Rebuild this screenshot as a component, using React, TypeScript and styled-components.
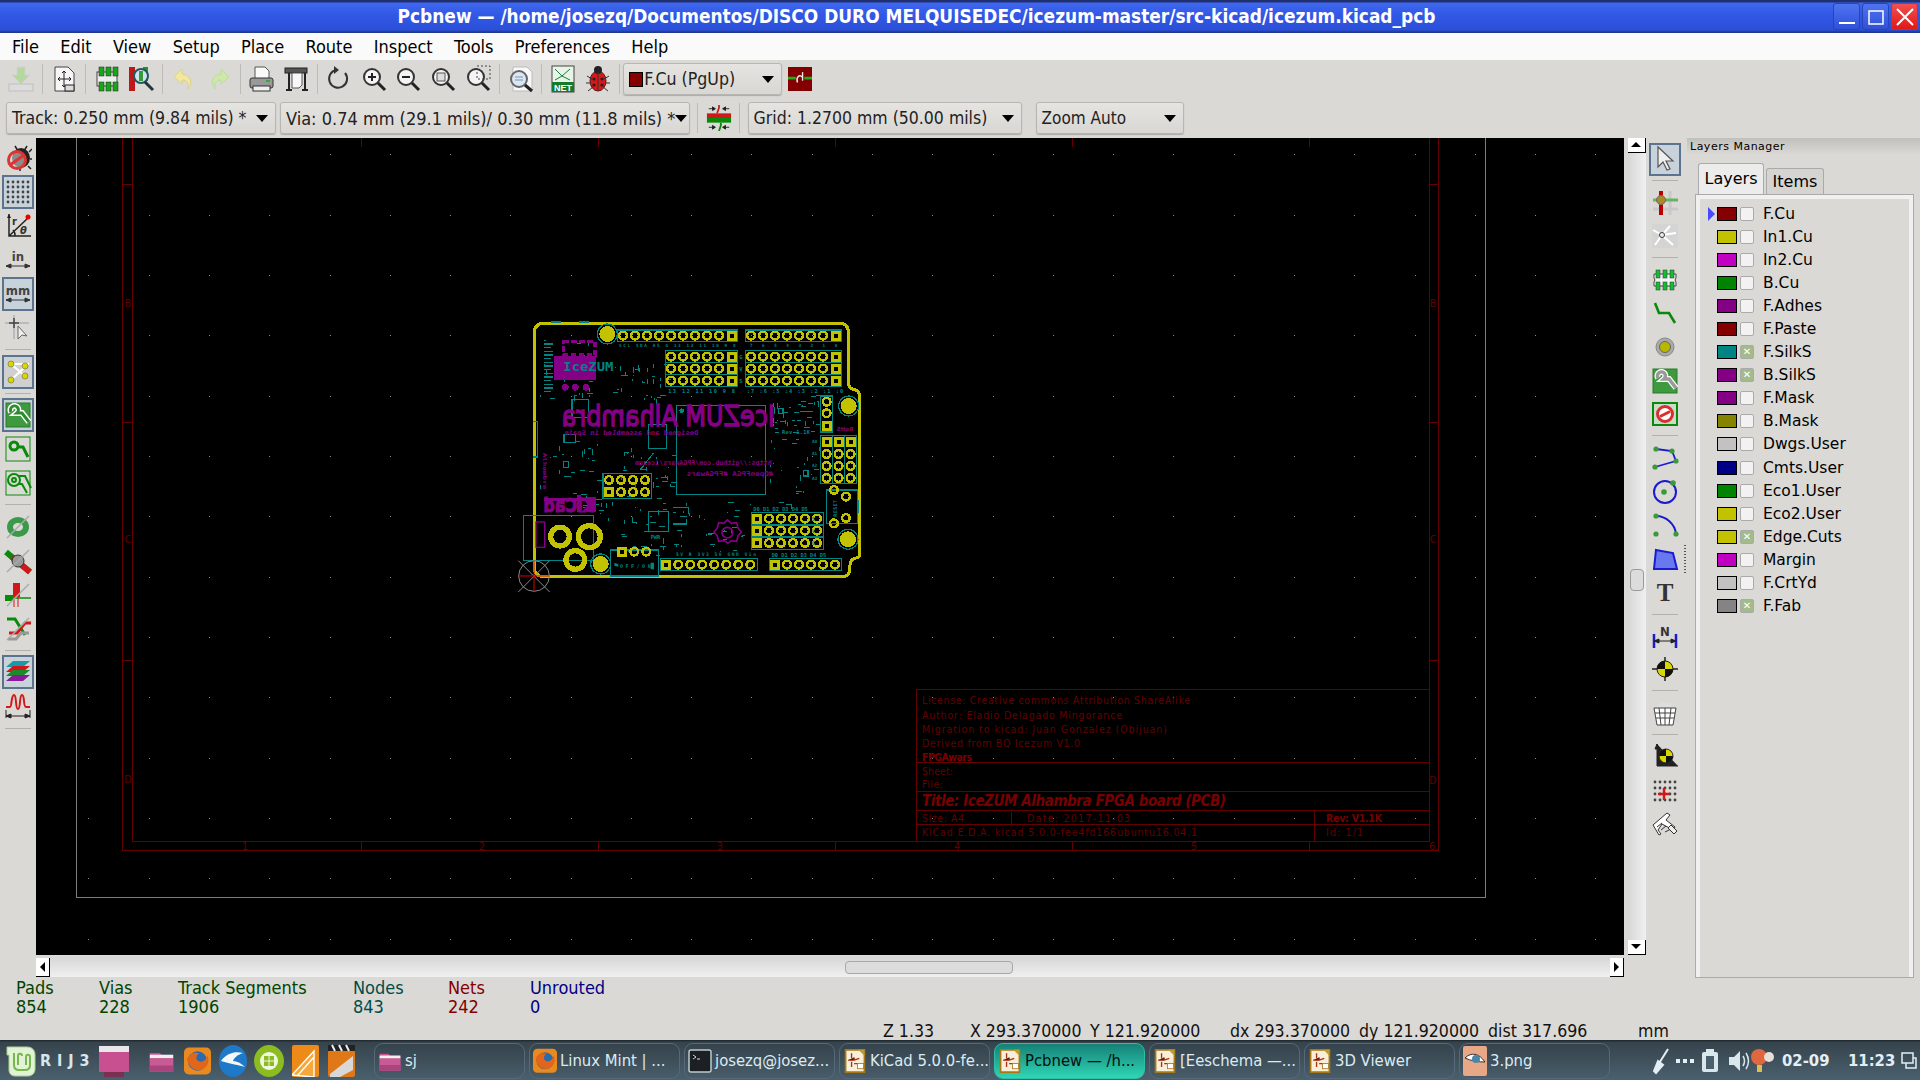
import React from "react";
import styled, { createGlobalStyle } from "styled-components";

const UI = `"DejaVu Sans Condensed", "DejaVu Sans", sans-serif`;

const Global = createGlobalStyle`
  html, body { margin: 0; padding: 0; background: #dbd9d5; overflow: hidden; }
  * { box-sizing: border-box; }
  #root { width: 1920px; height: 1080px; }
`;

const Page = styled.div`
  width: 1920px; height: 1080px; display: flex; flex-direction: column;
  font-family: ${UI}; font-stretch: condensed; background: #dbd9d5; color: #000;
`;

const TitleBar = styled.div`
  height: 33px; flex: none; display: flex; align-items: center;
  background: linear-gradient(#1f2f70 0, #1f2f70 2px, #3f68ee 3px, #3358e6 14px, #2b4fd8 30px, #1f3a90 32px);
`;
const TitleText = styled.div`
  flex: 1; text-align: center; color: #fff; font-weight: bold; font-size: 18.9px; white-space: nowrap; padding-bottom: 1px;
`;
const WinButtons = styled.div`
  display: flex; gap: 2px; padding-right: 2px;
`;
const WinButton = styled.div<{ $close?: boolean }>`
  width: 27px; height: 27px; border-radius: 3px; display: flex; align-items: center; justify-content: center;
  border: 1px solid ${p => (p.$close ? "#c83030" : "#2744b8")};
  background: ${p => (p.$close ? "linear-gradient(#f25050,#e01818)" : "linear-gradient(#4f74f0,#2f50d8)")};
`;

const MenuBar = styled.div`
  height: 27px; flex: none; background: #fafafa; display: flex; align-items: center; padding-left: 12px; gap: 21.3px; font-size: 18px;
`;
const MenuItem = styled.span`white-space: nowrap;`;

const ToolRow = styled.div`
  height: 38px; flex: none; display: flex; align-items: center; padding-left: 4px;
`;
const ToolRow2 = styled.div`
  height: 40px; flex: none; display: flex; align-items: center; padding-left: 6px; gap: 4px;
`;
const HTool = styled.div`
  width: 34.8px; height: 32px; flex: none; display: flex; align-items: center; justify-content: center;
`;
const HSep = styled.div`
  width: 7.8px; height: 30px; flex: none; display: flex; justify-content: center;
  &::before { content: ""; width: 1px; background: #bdbbb7; }
`;
const ComboGap = styled.div`width: 6px; flex: none;`;
const Combo = styled.div<{ $w: number; $fs: number }>`
  width: ${p => p.$w}px; height: 32px; flex: none; display: flex; align-items: center; padding: 0 7px 0 5px;
  border: 1px solid #b8b6b2; border-radius: 3px; background: linear-gradient(#e6e4e1, #d9d7d3);
  box-shadow: 0 1px 1px #aaa; font-size: ${p => p.$fs}px; white-space: nowrap; color: #222;
`;
const ComboText = styled.span`flex: 1;`;
const Caret = styled.span`
  width: 0; height: 0; border-left: 6px solid transparent; border-right: 6px solid transparent; border-top: 7px solid #000; flex: none;
`;
const ComboSwatch = styled.span`
  width: 14px; height: 15px; background: #840000; border: 1px solid #000; margin-right: 1px; flex: none;
`;

const Main = styled.div`
  height: 839px; flex: none; display: flex;
`;
const VBar = styled.div<{ $w: number; $pad: number }>`
  width: ${p => p.$w}px; flex: none; display: flex; flex-direction: column; align-items: center; padding-top: ${p => p.$pad}px;
`;
const VTool = styled.div<{ $active?: boolean; $h: number }>`
  width: 32px; height: ${p => p.$h}px; flex: none; display: flex; align-items: center; justify-content: center;
  ${p => p.$active ? "background:#c8d2da; outline:2px solid #5b738c; outline-offset:-2px;" : ""}
`;
const VSep = styled.div<{ $h: number }>`
  width: 26px; height: ${p => p.$h}px; flex: none; display: flex; align-items: center;
  &::before { content: ""; height: 1px; width: 100%; background: #b3b1ad; }
`;
const Center = styled.div`
  width: 1610px; flex: none; display: flex; flex-direction: column;
`;
const CanvasRow = styled.div`
  height: 817px; flex: none; display: flex;
`;
const CanvasWrap = styled.div`
  width: 1588px; flex: none; background: #000; overflow: hidden;
`;
const VScroll = styled.div`
  width: 19px; margin-left: 3px; flex: none; display: flex; flex-direction: column; align-items: center;
  background: linear-gradient(90deg, #d6d6d6, #f0f0f0);
`;
const HScrollRow = styled.div`
  height: 22px; flex: none; display: flex; align-items: flex-end;
`;
const HScroll = styled.div`
  width: 1588px; height: 20px; display: flex; align-items: center;
  background: linear-gradient(#d6d6d6, #f0f0f0);
`;
const ArrowBtn = styled.div`
  width: 18px; height: 15px; background: #fff; border-right: 1px solid #000; border-bottom: 1px solid #000; flex: none;
  display: flex; align-items: center; justify-content: center;
`;
const ArrowBtnH = styled(ArrowBtn)`width: 14px; height: 19px;`;
const VThumb = styled.div`
  width: 14px; height: 22px; border: 1px solid #9a9a9a; border-radius: 4px; background: #dcdcdc; margin-top: 416px; margin-bottom: auto;
`;
const HThumb = styled.div`
  width: 168px; height: 13px; border: 1px solid #a8a8a8; border-radius: 4px; background: #dcdcdc; margin-left: 795px; margin-right: auto;
`;
const Grip = styled.div`
  width: 2px; height: 30px; flex: none; margin: 407px 0 0 0;
  background: repeating-linear-gradient(#555 0, #555 1px, transparent 1px, transparent 3px);
`;
const Panel = styled.div`
  flex: 1; display: flex; flex-direction: column; margin-left: 1px;
`;
const PanelCaption = styled.div`
  height: 17px; flex: none; display: flex; align-items: center; padding-left: 3px; font-size: 11px; letter-spacing: .5px;
  font-family: "DejaVu Sans", sans-serif; font-stretch: normal; background: linear-gradient(#c2c0bd, #dbd9d5);
`;
const TabRow = styled.div`
  height: 40px; flex: none; display: flex; align-items: flex-end; padding-left: 11px; gap: 2px;
  font-family: "DejaVu Sans", sans-serif; font-stretch: normal;
`;
const Tab = styled.div<{ $on?: boolean }>`
  height: ${p => (p.$on ? 32 : 27)}px; width: ${p => (p.$on ? 66 : 58)}px; display: flex; align-items: center; justify-content: center;
  padding-bottom: 2px;
  font-size: 16px; border: 1px solid #aaa; border-bottom: none; border-radius: 3px 3px 0 0;
  background: ${p => (p.$on ? "#ececec" : "#d6d4d0")};
`;
const TabBody = styled.div`
  flex: 1; margin: 0 7px 0 9px; border: 4px solid #f0f0f0; border-bottom: none; outline: 1px solid #aaa; outline-offset: 0; padding-top: 3px;
  display: flex; flex-direction: column;
`;
const LayerRow = styled.div`
  height: 23.1px; flex: none; display: flex; align-items: center; padding-left: 8px;
  font-family: "DejaVu Sans", sans-serif; font-stretch: normal; font-size: 15.5px;
`;
const LayerArrow = styled.div<{ $on?: boolean }>`
  width: 0; height: 0; flex: none; margin-right: 2px;
  border-top: 7px solid transparent; border-bottom: 7px solid transparent;
  border-left: 7px solid ${p => (p.$on ? "#4848ff" : "transparent")};
`;
const Swatch = styled.div<{ $c: string }>`
  width: 20px; height: 14px; flex: none; background: ${p => p.$c}; border: 1px solid #000;
`;
const Check = styled.div<{ $on?: boolean }>`
  width: 14px; height: 14px; flex: none; margin: 0 9px 0 3px; border: 1px solid #aaa; border-radius: 2px;
  display: flex; align-items: center; justify-content: center; font-size: 10px; line-height: 1; color: #fff; font-weight: bold;
  background: ${p => (p.$on ? "#a3bb8a" : "#f2f2f2")};
`;

const Status = styled.div`
  height: 63px; flex: none; display: flex; flex-direction: column; padding-top: 1px;
`;
const Stats = styled.div`
  height: 40px; flex: none; display: flex; padding-left: 16px; font-size: 18px; line-height: 19px;
`;
const Stat = styled.div<{ $w: number; $c: string }>`
  width: ${p => p.$w}px; flex: none; color: ${p => p.$c};
`;
const Readouts = styled.div`
  flex: 1; display: flex; align-items: center; padding-left: 883px; font-size: 17.6px; padding-top: 3px;
`;
const Readout = styled.div<{ $w: number }>`
  width: ${p => p.$w}px; flex: none; white-space: nowrap; color: #111;
`;

const Taskbar = styled.div`
  height: 40px; flex: none; display: flex; align-items: center; padding: 1px 0 0 5px;
  background: linear-gradient(#222c33 0, #222c33 1px, #36434c 2px, #4a606e 100%);
  color: #e6eff4; font-size: 16.5px;
`;
const Launcher = styled.div<{ $l: number; $w: number }>`
  width: ${p => p.$w}px; margin-left: ${p => p.$l}px; height: 34px; flex: none; display: flex; align-items: center; justify-content: center;
`;
const Desks = styled.div`
  width: 50px; margin-left: 3px; font-weight: bold; font-size: 16px; letter-spacing: 1.2px; word-spacing: -1.5px; color: #d6e6ee; white-space: nowrap; flex: none;
`;
const Task = styled.div<{ $on?: boolean }>`
  width: 151px; height: 36px; flex: none; display: flex; align-items: center; padding-left: 3px; gap: 3px; margin-right: 4px;
  border-radius: 9px; border: 1px solid ${p => (p.$on ? "#2bbfa5" : "#55697a")};
  background: ${p => (p.$on ? "linear-gradient(#168076,#2fd6b6)" : "linear-gradient(#35434c,#485c69)")};
  color: ${p => (p.$on ? "#03110f" : "#dcebf2")}; white-space: nowrap; overflow: hidden;
  & > svg { flex: none; }
`;
const Tray = styled.div`
  flex: 1; display: flex; align-items: center; margin-left: 38px; font-weight: bold; font-size: 16.5px; color: #e3eef5;
`;
const TrayItem = styled.div<{ $w: number }>`
  width: ${p => p.$w}px; flex: none; display: flex; align-items: center; white-space: nowrap;
`;

/* ---------- icons ---------- */
const Svg: React.FC<{ s?: number; children: React.ReactNode }> = ({ s = 28, children }) => (
  <svg width={s} height={s} viewBox="0 0 28 28" fill="none">{children}</svg>
);
const Lens: React.FC<{ children?: React.ReactNode }> = ({ children }) => (
  <>
    <circle cx="12" cy="12" r="8" fill="#f4f4f4" stroke="#333" strokeWidth="2" />
    <path d="M18 18l7 7" stroke="#222" strokeWidth="3" />
    {children}
  </>
);
const NoSlash = () => <path d="M3 25L25 3" stroke="#aaa" strokeWidth="1.5" />;
const G = "#0a8a0a";

const icons: Record<string, React.ReactNode> = {
  save: <><path d="M10 2h8v8h5l-9 9-9-9h5z" fill="#b6d8a0" stroke="#d0d0d0" /><rect x="2" y="19" width="24" height="7" fill="#dcdcdc" stroke="#c0c0c0" /></>,
  page: <><path d="M5 2h13l6 6v18H5z" fill="#f6f6f6" stroke="#444" /><path d="M8 14h13M14 6v16M8 14l2-2M8 14l2 2M21 14l-2-2M21 14l-2 2M14 6l-2 2M14 6l2 2M14 22l-2-2M14 22l2-2" stroke="#222" /><rect x="15" y="20" width="9" height="6" fill="#ddd" stroke="#222" /></>,
  mod: <><rect x="4" y="7" width="20" height="14" fill="#eee" stroke="#444" /><g fill="#1aa61a" stroke="#222" strokeWidth=".5"><rect x="6" y="2" width="5" height="9" /><rect x="13" y="2" width="5" height="9" /><rect x="20" y="2" width="5" height="9" /><rect x="6" y="17" width="5" height="9" /><rect x="13" y="17" width="5" height="9" /><rect x="20" y="17" width="5" height="9" /></g></>,
  modsearch: <><rect x="2" y="2" width="6" height="24" fill="#c01818" /><rect x="16" y="2" width="5" height="14" fill="#1a9a1a" /><circle cx="14" cy="11" r="7" fill="#cfe6e6" stroke="#256" strokeWidth="2" /><rect x="12" y="6" width="4" height="10" fill="#3a9a3a" /><path d="M18 17l8 8" stroke="#234" strokeWidth="3" /></>,
  undo: <path d="M12 4L4 12l8 7v-4c5 0 7 3 6 9 5-6 3-14-6-15z" fill="#f3e7a0" stroke="#dcd28a" />,
  redo: <path d="M16 4l8 8-8 7v-4c-5 0-7 3-6 9-5-6-3-14 6-15z" fill="#cfe8a8" stroke="#bcdca0" />,
  print: <><path d="M8 2h10l4 4v8H8z" fill="#fafafa" stroke="#555" /><rect x="3" y="13" width="23" height="10" rx="2" fill="#999" stroke="#333" /><rect x="6" y="21" width="17" height="5" fill="#eee" stroke="#333" /><rect x="19" y="15" width="4" height="2" fill="#3a3" /></>,
  plot: <><rect x="3" y="3" width="22" height="5" fill="#555" stroke="#222" /><path d="M7 8v17M23 8v17M4 25h6M20 25h6" stroke="#222" strokeWidth="2" /><path d="M10 8h10v12l-3 3h-7z" fill="#f8f8f8" stroke="#555" /></>,
  refresh: <><path d="M20 8a9 9 0 1 1-9-3" stroke="#333" strokeWidth="2" /><path d="M9 1v8l5-4z" fill="#333" /></>,
  zin: <Lens><path d="M8 12h8M12 8v8" stroke="#222" strokeWidth="2" /></Lens>,
  zout: <Lens><path d="M8 12h8" stroke="#222" strokeWidth="2" /></Lens>,
  zfit: <Lens><rect x="8" y="8" width="8" height="8" stroke="#555" fill="#ddd" /></Lens>,
  zsel: <Lens><rect x="13" y="1" width="13" height="13" stroke="#444" strokeDasharray="2 2" /></Lens>,
  find: <><path d="M6 2h14l5 5v19H6z" fill="#f8f8f8" stroke="#bbb" /><circle cx="12" cy="14" r="8" fill="#dbe6f4" stroke="#666" strokeWidth="2" /><path d="M8 12h8M8 15h8" stroke="#79a" /><path d="M18 20l7 6" stroke="#222" strokeWidth="3" /></>,
  net: <><rect x="3" y="1" width="22" height="26" fill="#e8f4e8" stroke="#444" /><path d="M6 4l7 7 8-7M6 15l7-4 8 4" stroke="#1a7a3a" /><rect x="3" y="17" width="22" height="10" fill="#157a2a" /><text x="14" y="26" textAnchor="middle" fontSize="9" fontWeight="bold" fill="#fff" fontFamily="Liberation Sans, sans-serif">NET</text></>,
  bug: <><ellipse cx="14" cy="16" rx="8" ry="10" fill="#d81818" stroke="#611" /><circle cx="14" cy="5" r="4" fill="#222" /><path d="M14 7v19M3 11l5 3M25 11l-5 3M2 18h5M26 18h-5M4 26l5-4M24 26l-5-4" stroke="#333" /><g fill="#222"><circle cx="10" cy="14" r="1.6" /><circle cx="18" cy="14" r="1.6" /><circle cx="10" cy="20" r="1.6" /><circle cx="18" cy="20" r="1.6" /></g></>,
  bugoff: <><ellipse cx="17" cy="14" rx="9" ry="10" fill="#222" /><path d="M11 2l3 5M23 2l-3 5M25 8l3-3M26 15h2M24 22l3 3M16 24v3" stroke="#222" strokeWidth="1.5" /><circle cx="13" cy="16" r="8.5" fill="#e6e0dc" fillOpacity=".55" stroke="#d33" strokeWidth="3" /><path d="M6 21L20 11" stroke="#d33" strokeWidth="3" /></>,
  grid: <g fill="#444">{[5, 10, 15, 20, 25].flatMap(y => [4, 9, 14, 19, 24].map(x => <circle key={x + "-" + y} cx={x} cy={y - 1} r="1.4" />))}</g>,
  polar: <><path d="M5 2v22h22M5 24L24 6M11 24a8 8 0 0 0-2-6" stroke="#222" strokeWidth="1.5" /><path d="M5 2l-2 4h4z" fill="#222" /><circle cx="24" cy="5" r="2.5" fill="#e00" /><text x="8" y="13" fontSize="11" fontWeight="bold" fontFamily="DejaVu Sans, sans-serif" fill="#333">r</text><text x="16" y="22" fontSize="11" fontStyle="italic" fontWeight="bold" fontFamily="DejaVu Sans, sans-serif" fill="#333">θ</text></>,
  unitin: <><text x="14" y="15" textAnchor="middle" fontSize="13" fontWeight="bold" fontFamily="DejaVu Sans, sans-serif" fill="#444">in</text><path d="M2 20h24M2 20l5-2v4zM26 20l-5-2v4z" stroke="#333" fill="#333" /></>,
  unitmm: <><text x="14" y="15" textAnchor="middle" fontSize="13" fontWeight="bold" fontFamily="DejaVu Sans, sans-serif" fill="#444">mm</text><path d="M2 20h24M2 20l5-2v4zM26 20l-5-2v4z" stroke="#333" fill="#333" /></>,
  cross: <><path d="M1 9h24M10 1v24" stroke="#bbb" strokeWidth="2" /><path d="M5 9h10M10 4v10" stroke="#444" strokeWidth="1.5" /><path d="M14 12v13l4-4 5 1z" fill="#eee" stroke="#666" /></>,
  rats: <><rect x="1" y="1" width="26" height="26" fill="#d0d0d0" rx="1" /><path d="M7 6l15 13M7 22l15-14M7 6h18" stroke="#fff" strokeWidth="2" /><g fill="#d8d800" stroke="#555" strokeWidth=".5"><circle cx="7" cy="6" r="3" /><circle cx="7" cy="22" r="3" /><circle cx="21" cy="8" r="3" /><circle cx="21" cy="18" r="3" /></g></>,
  zoneFill: <><rect x="2" y="2" width="24" height="24" fill="#3e9a3e" stroke="#2a7a2a" /><path d="M7 11a4 4 0 1 1 6 1l5 0 7 9" stroke="#fff" strokeWidth="6" /><path d="M7 11a4 4 0 1 1 6 1l5 0 7 9" stroke="#2e8a2e" strokeWidth="3" /></>,
  zoneLine: <><rect x="2" y="2" width="24" height="24" stroke={G} /><circle cx="10" cy="11" r="4" stroke={G} strokeWidth="3" /><path d="M14 12h5l5 10" stroke={G} strokeWidth="3" /></>,
  zoneOutline: <><rect x="2" y="2" width="24" height="24" stroke={G} /><circle cx="10" cy="11" r="6" stroke={G} strokeWidth="2" /><circle cx="10" cy="11" r="2" stroke={G} strokeWidth="2" /><path d="M15 7h6l6 12M14 15h4l5 9" stroke={G} strokeWidth="2" /></>,
  viaSketch: <><ellipse cx="14" cy="14" rx="8" ry="7" stroke="#3a9a4a" strokeWidth="6" /><NoSlash /></>,
  padSketch: <><path d="M2 5l24 20" stroke={G} strokeWidth="6" /><path d="M8 10l18 15" stroke="#d01818" strokeWidth="6" /><circle cx="14" cy="14" r="6" fill="#999" stroke="#333" /><NoSlash /></>,
  trackSketch: <><rect x="9" y="2" width="7" height="14" fill="#d01818" /><rect x="1" y="14" width="8" height="6" fill={G} /><path d="M1 17h26" stroke={G} strokeWidth="1.5" /><path d="M10 16v10M14 16v10" stroke="#d01818" /><NoSlash /></>,
  routeSketch: <><path d="M3 4h8l10 16" stroke={G} strokeWidth="3" /><path d="M5 18h8l8-10h6" stroke="#d01818" strokeWidth="3" /><path d="M4 24h8l5-6h8" stroke="#999" strokeWidth="3" /><NoSlash /></>,
  layers: <><path d="M2 9l7-6h17l-7 6z" fill="#1a9aa8" /><path d="M2 14l7-6h17l-7 6z" fill="#d01818" /><path d="M2 18l7-6h17l-7 6z" fill="#1a8a2a" /><path d="M2 23l7-6h17l-7 6z" fill="#8a1a9a" /></>,
  meander: <><path d="M2 15h4c2 0 1-12 4-12s1 14 4 14 1-14 4-14 1 12 4 12h4" stroke="#d01818" strokeWidth="2" strokeLinejoin="round" /><path d="M2 18v8M26 18v8M2 24h24M2 24l5-2v4zM26 24l-5-2v4z" stroke="#222" fill="#222" /></>,
  arrow: <path d="M7 2v20l5-5 4 8 3-1-4-8h7z" fill="#eee" stroke="#555" strokeWidth="1.2" />,
  hlnet: <><path d="M19 2v24" stroke="#c8c8c8" strokeWidth="3" /><path d="M2 20h25" stroke="#c8c8c8" strokeWidth="3" /><path d="M2 11h25" stroke="#66b266" strokeWidth="3" /><path d="M10 2v24" stroke="#b80000" strokeWidth="4" /><circle cx="10" cy="11" r="4.5" fill="#a88a28" stroke="#766" /></>,
  localrats: <><rect x="1" y="2" width="26" height="24" rx="1" fill="#d4d4d4" /><path d="M11 13L2 8M11 13l8-9M11 13l14-2M11 13l11 10M11 13l-7 10" stroke="#fff" strokeWidth="2" /><circle cx="11" cy="13" r="2.5" fill="#eee" stroke="#333" /></>,
  module: <><path d="M3 8h22v4l-1 2 1 2v4H3v-4l1-2-1-2z" fill="#f2f2f2" stroke="#444" /><g fill="#10c030" stroke="#333" strokeWidth=".5"><rect x="5" y="4" width="4" height="8" /><rect x="12" y="4" width="4" height="8" /><rect x="19" y="4" width="4" height="8" /><rect x="5" y="16" width="4" height="8" /><rect x="12" y="16" width="4" height="8" /><rect x="19" y="16" width="4" height="8" /></g></>,
  track: <path d="M4 4l4 10h10l6 10" stroke={G} strokeWidth="2.6" />,
  via: <><circle cx="14" cy="14" r="9" fill="#aaa" stroke="#888" /><circle cx="14" cy="14" r="5.5" fill="#b8b800" stroke="#666" /></>,
  keep: <><rect x="2" y="3" width="24" height="22" fill="#c8dcc8" stroke={G} strokeWidth="2" /><circle cx="14" cy="14" r="7.5" fill="#fff" stroke="#d83030" strokeWidth="3" /><path d="M9 16.5L19 11.5" stroke="#d83030" strokeWidth="3" /></>,
  poly: <><path d="M5 5l16 2 4 10-21 6" stroke="#1a1ad0" strokeWidth="1.8" /><g fill="#3a9a3a"><circle cx="5" cy="5" r="2.6" /><circle cx="21" cy="7" r="2.6" /><circle cx="25" cy="17" r="2.6" /><circle cx="4" cy="23" r="2.6" /></g></>,
  circle: <><circle cx="14" cy="15" r="11" stroke="#1a1ad0" strokeWidth="2" /><circle cx="13" cy="15" r="2.8" fill="#3a9a3a" /><circle cx="22" cy="6" r="2.8" fill="#3a9a3a" /></>,
  arc: <><path d="M5 5c10 0 19 8 20 18" stroke="#1a1ad0" strokeWidth="2" /><g fill="#3a9a3a"><circle cx="5" cy="5" r="2.6" /><circle cx="25" cy="23" r="2.6" /><circle cx="5" cy="23" r="2.6" /></g></>,
  polygon: <path d="M5 5l17 3 4 16H3z" fill="#6a78f0" stroke="#1a1ad0" strokeWidth="2" />,
  text: <text x="14" y="23" textAnchor="middle" fontSize="25" fontWeight="bold" fontFamily="Liberation Serif, serif" fill="#333">T</text>,
  dim: <><path d="M3 12v14M25 12v14" stroke="#1a1ad0" strokeWidth="2.5" /><path d="M3 19h22M3 19l5-2v4zM25 19l-5-2v4z" stroke="#222" fill="#222" /><text x="14" y="14" textAnchor="middle" fontSize="13" fontWeight="bold" fontFamily="DejaVu Sans, sans-serif" fill="#333">N</text></>,
  target: <><path d="M1 14h26M14 2v24" stroke="#222" strokeWidth="1.5" /><circle cx="14" cy="14" r="8" fill="#d8d800" stroke="#222" /><path d="M14 6a8 8 0 0 0-8 8h8zM14 22a8 8 0 0 0 8-8h-8z" fill="#111" /></>,
  trash: <><path d="M3 9h22l-3 17H6z" fill="#fff" stroke="#444" /><path d="M8 9l2 17M14 9v17M20 9l-2 17M4 14h20M5 19h18" stroke="#444" /><path d="M6 8c1-4 6-5 8-4 4-2 7 1 8 4z" fill="#ddd" /></>,
  origin: <><path d="M6 2v22h21M6 2L4 7h4z" stroke="#222" fill="#222" /><circle cx="15" cy="14" r="7" fill="#d8d800" stroke="#222" /><path d="M15 7a7 7 0 0 0-7 7h7zM15 21a7 7 0 0 0 7-7h-7z" fill="#111" /></>,
  gridorigin: <><g fill="#444">{[6, 12, 18, 24].flatMap(y => [4, 9, 14, 19, 24].map(x => <circle key={x + "_" + y} cx={x} cy={y} r="1.4" />))}</g><path d="M7 18h12M13 12v12" stroke="#d01818" strokeWidth="2.4" /></>,
  measure: <><path d="M2 16L16 4l3 2-4 5 9 7-2 3-11-6-4 6 3 4-2 1z" fill="#fff" stroke="#333" /><path d="M6 18l5-4M10 21l5-4M14 23l6-3" stroke="#333" /><path d="M20 16l6 6-3 3-6-6z" fill="#eee" stroke="#333" /></>,
  layerbtn: <><rect x="0" y="0" width="28" height="28" fill="#840000" /><path d="M0 13h9M19 13h9" stroke="#1cb01c" strokeWidth="3" /><path d="M11 18c-2-6 2-10 6-6" stroke="#eee" strokeWidth="1.6" /><path d="M17 6v10" stroke="#eee" strokeWidth="1.6" /></>,
  trackvia: <><path d="M14 0v3l-2 6" stroke="#c01818" strokeWidth="1.8" /><path d="M3 4h7M25 4h-7M10 4l-3-2v4zM18 4l3-2v4z" stroke="#222" fill="#222" /><rect x="1" y="9" width="26" height="5" fill="#d01818" /><rect x="1" y="14" width="26" height="5" fill="#0a8a0a" /><path d="M16 19v3l-2 6" stroke={G} strokeWidth="2" /><path d="M3 24h7M25 24h-7M10 24l-3-2v4zM18 24l3-2v4z" stroke="#222" fill="#222" /></>,
};
icons.zoneFill2 = <><rect x="2" y="2" width="24" height="24" fill="#3e9a3e" stroke="#2a7a2a" /><path d="M7 11a4 4 0 1 1 6 1l5 0 7 9" stroke="#fff" strokeWidth="6" /><path d="M7 11a4 4 0 1 1 6 1l5 0 7 9" stroke="#999" strokeWidth="3.5" /></>;

const I: React.FC<{ n: string; s?: number }> = ({ n, s }) => <Svg s={s}>{icons[n]}</Svg>;

const KicadDoc = () => (
  <svg width="24" height="26" viewBox="0 0 28 30">
    <path d="M3 2h22v26H3z" fill="#f8efd8" stroke="#a87818" strokeWidth="2" />
    <path d="M18 2h7v7z" fill="#c09a28" />
    <path d="M10 6v6M6 14h7v-3M13 14l6-2M13 18h4M10 16v6" stroke="#b03018" strokeWidth="1.6" />
    <rect x="17" y="18" width="7" height="6" fill="#fff" stroke="#a87818" />
  </svg>
);
const Folder: React.FC<{ s?: number }> = ({ s = 30 }) => (
  <svg width={s} height={s} viewBox="0 0 30 30">
    <path d="M2 6h11l3 3h12v18H2z" fill="#c94f8c" />
    <path d="M2 8h26v4H2z" fill="#efefef" />
    <path d="M2 12h26v15H2z" fill="#c85a96" />
    <path d="M2 20h26v7H2z" fill="#a9457c" />
  </svg>
);
const Firefox: React.FC<{ w?: number }> = ({ w = 28 }) => (
  <svg width={w} height={(w * 32) / 28} viewBox="0 0 28 32">
    <rect x="0" y="2" width="28" height="28" rx="5" fill="#e98a20" />
    <circle cx="14" cy="16" r="10" fill="#2a6ab0" />
    <path d="M3 14c2 10 12 16 20 8 3-4 3-9 1-12-1 6-6 8-9 6-3-1-3-6 1-8-6-2-11 1-13 6z" fill="#e2661a" />
  </svg>
);
const TermIcon = () => (
  <svg width="24" height="24" viewBox="0 0 24 24">
    <rect x="1" y="1" width="22" height="22" rx="2" fill="#1c2024" stroke="#bcc" strokeWidth="1.5" />
    <path d="M5 6l3 2-3 2M9 10h3" stroke="#ddd" />
  </svg>
);

/* ---------- canvas ---------- */
const Y = "#c2c200";
const T = "#008484";
const P = "#840084";
const R = "#640000";

const Pad: React.FC<{ x: number; y: number; sq?: boolean }> = ({ x, y, sq }) =>
  sq ? (
    <g>
      <rect x={x - 15} y={y - 15} width="30" height="30" fill={Y} />
      <rect x={x - 6} y={y - 6} width="12" height="12" fill="#000" />
    </g>
  ) : (
    <circle cx={x} cy={y} r="11.5" fill="none" stroke={Y} strokeWidth="7.5" />
  );

const range = (s: number, n: number, d: number) => Array.from({ length: n }, (_, i) => s + i * d);

const padRows: [number[], number, number][] = [
  [range(369, 9, 36), 107, 695], [range(753, 7, 36), 107, 1007],
  [range(513, 5, 36), 170, 695], [range(513, 5, 36), 206, 695], [range(513, 5, 36), 242, 695],
  [range(753, 7, 36), 170, 1007], [range(753, 7, 36), 206, 1007], [range(753, 7, 36), 242, 1007],
];
const tealRects = [
  [352, 90, 360, 34], [737, 90, 288, 34], [497, 152, 215, 36], [497, 188, 215, 36], [497, 224, 215, 36],
  [737, 152, 288, 36], [737, 188, 288, 36], [737, 224, 288, 36], [962, 288, 35, 108], [962, 407, 108, 144],
  [998, 407, 36, 144], [309, 521, 145, 74], [755, 638, 215, 37], [755, 675, 215, 36], [755, 711, 215, 37],
  [482, 776, 290, 35], [808, 776, 217, 35], [980, 570, 92, 100], [529, 316, 268, 268], [445, 634, 60, 60],
  [70, 646, 210, 136], [332, 750, 144, 78], [445, 374, 54, 72], [216, 298, 50, 54], [192, 404, 34, 24], [190, 485, 16, 18],
  [910, 512, 14, 16], [835, 326, 14, 14],
];
const marks: [number, number, number, number][] = [];
(() => {
  let s = 7;
  const rnd = () => ((s = (s * 16807) % 2147483647) / 2147483647);
  const zones = [[120, 280, 120, 300], [330, 500, 190, 300], [110, 300, 420, 640], [290, 520, 600, 770], [520, 760, 600, 760], [800, 960, 280, 620], [360, 520, 440, 600], [820, 960, 300, 400]];
  zones.forEach(z => {
    for (let i = 0; i < 32; i++) {
      const x = z[0] + rnd() * (z[1] - z[0]), y = z[2] + rnd() * (z[3] - z[2]);
      const h = rnd() > .5;
      const l = 3 + rnd() * 16;
      marks.push([Math.round(x), Math.round(y), h ? l : 3, h ? 3 : l]);
    }
  });
})();

const Board = () => (
  <g transform="translate(464,162) scale(0.3333)">
    <g shapeRendering="crispEdges">
      <path d="M103 100 Q103 70 133 70 H1018 Q1045 70 1045 97 V245 Q1045 266 1060 268 Q1080 272 1080 292 V760 Q1080 772 1065 775 Q1050 780 1050 795 V805 Q1050 830 1025 830 H133 Q103 830 103 800 Z"
        fill="none" stroke={Y} strokeWidth="9" />
      <g fill="none" stroke={T} strokeWidth="3.5">
        {tealRects.map((r, i) => <rect key={i} x={r[0]} y={r[1]} width={r[2]} height={r[3]} />)}
        <path d="M152 66h30M236 66h30M100 365h12v106h-12M70 782l30 0M420 510l40-50M1075 600v40M520 622h45v20M520 672h40v-15" />
        <circle cx="322" cy="102" r="30" /><circle cx="1046" cy="318" r="30" /><circle cx="1044" cy="718" r="30" /><circle cx="302" cy="792" r="30" />
      </g>
      <g fill={T}>{marks.map((m, i) => <rect key={i} x={m[0]} y={m[1]} width={m[2]} height={m[3]} />)}</g>
      <g fill={T}>
        {range(130, 14, 11).map(y => <rect key={y} x="132" y={y} width={y % 3 ? 28 : 20} height="4" />)}
        <circle cx="545" cy="332" r="7" />
      </g>
      <g fill={Y}>
        <circle cx="322" cy="102" r="24" /><circle cx="1046" cy="318" r="24" /><circle cx="1044" cy="718" r="24" /><circle cx="302" cy="792" r="24" />
      </g>
      <g fill="none" stroke={Y} strokeWidth="16">
        <circle cx="180" cy="710" r="28" /><circle cx="268" cy="710" r="33" /><circle cx="226" cy="780" r="28" />
      </g>
      {padRows.map(([xs, y, sq], i) => (
        <g key={i}>{xs.map(x => <Pad key={x} x={x} y={y} />)}<Pad x={sq} y={y} sq /></g>
      ))}
      {[[980, 305], [980, 340]].map(([x, y]) => <Pad key={y} x={x} y={y} />)}
      <Pad x={980} y={378} sq />
      {[980, 1016, 1052].map(x => (
        <g key={x}><Pad x={x} y={425} sq />{[462, 498, 534].map(y => <Pad key={y} x={x} y={y} />)}</g>
      ))}
      {[327, 363, 399, 435].map(x => <Pad key={x} x={x} y={540} />)}
      <Pad x={327} y={576} sq />{[363, 399, 435].map(x => <Pad key={x} x={x} y={576} />)}
      {[656, 692, 729].map(y => (
        <g key={y}><Pad x={771} y={y} sq />{range(807, 5, 36).map(x => <Pad key={x} x={x} y={y} />)}</g>
      ))}
      <Pad x={499} y={794} sq />{range(535, 7, 36).map(x => <Pad key={x} x={x} y={794} />)}
      <Pad x={825} y={794} sq />{range(861, 5, 36).map(x => <Pad key={x} x={x} y={794} />)}
      <Pad x={367} y={755} sq /><Pad x={403} y={755} /><Pad x={439} y={755} />
      <Pad x={1002} y={570} /><Pad x={1038} y={590} /><Pad x={1038} y={654} /><Pad x={1002} y={670} />

      <rect x="162" y="168" width="126" height="72" fill={P} />
      <rect x="190" y="125" width="95" height="40" fill="none" stroke={P} strokeWidth="10" strokeDasharray="16 8" />
      <g fill={P}>
        <circle cx="196" cy="262" r="10" /><circle cx="226" cy="262" r="10" /><circle cx="258" cy="262" r="10" />
        <rect x="132" y="594" width="154" height="8" />
        <rect x="262" y="592" width="26" height="44" />
        <rect x="232" y="584" width="10" height="52" />
      </g>
    </g>
    <g fontFamily="DejaVu Sans, sans-serif" fontWeight="bold" fill={P}>
      <text transform="translate(825,378) scale(-1,1)" fontSize="84" fontWeight="normal" stroke={P} strokeWidth="4" textLength="640" lengthAdjust="spacingAndGlyphs">IceZUM Alhambra</text>
      <text transform="translate(595,406) scale(-1,1)" fontFamily="DejaVu Sans Mono, monospace" fontSize="20" textLength="402" lengthAdjust="spacingAndGlyphs">Designed and assembled in Spain</text>
      <text transform="translate(815,496) scale(-1,1)" fontFamily="DejaVu Sans Mono, monospace" fontSize="20" textLength="410" lengthAdjust="spacingAndGlyphs">https://github.com/FPGAwars/icezum</text>
      <text transform="translate(820,528) scale(-1,1)" fontFamily="DejaVu Sans Mono, monospace" fontSize="20" textLength="260" lengthAdjust="spacingAndGlyphs">#OpenFPGA #FPGAwars</text>
      <text transform="translate(285,636) scale(-1,1)" fontSize="58" stroke={P} strokeWidth="3" textLength="155" lengthAdjust="spacingAndGlyphs">KiCad</text>
      <text transform="translate(128,458) rotate(90)" fontFamily="DejaVu Sans Mono, monospace" fontSize="16" textLength="110" lengthAdjust="spacingAndGlyphs">Alhambra</text>
      <text transform="translate(1060,392) scale(-1,1)" fontSize="16" textLength="50" lengthAdjust="spacingAndGlyphs">RoHS</text>
    </g>
    <g fill="none" stroke={P} strokeWidth="5">
      <circle cx="682" cy="698" r="16" />
      <path d="M682 660l12 10 16-2 4 16 10 12-10 12-4 16-16-2-10 8-12-8-16 2-4-16-10-12 10-12 4-16 16 2z" />
      <rect x="108" y="666" width="26" height="76" strokeWidth="4" />
    </g>
    <g fontFamily="DejaVu Sans Mono, monospace" fill={T} fontWeight="bold" fontSize="16">
      <text x="190" y="212" fontSize="38" textLength="150" lengthAdjust="spacingAndGlyphs">IceZUM</text>
      <text x="760" y="634">D0 D1 D2 D3 D4 D5</text>
      <text x="815" y="770">D0 D1 D2 D3 D4 D5</text>
      <text x="505" y="280" textLength="200">13 12 11 10  9  8</text>
      <text x="740" y="280" textLength="290">:7 :6 :5 :4 :3 :2 :1 :0</text>
      <text x="357" y="141" textLength="350" fontSize="13">SCL SDA A5 G 13 12 11 10 9 8</text>
      <text x="750" y="141" textLength="262" fontSize="13">7 6 5 4 3 2 1 0</text>
      <text x="846" y="403" textLength="84">Rev 1.1K</text>
      <text x="528" y="769" textLength="240" fontSize="14">5V R 3V3 5V GND Vin</text>
      <text x="452" y="716">PWR</text>
      <text x="718" y="177">G</text><text x="718" y="212">V</text><text x="718" y="248">S</text>
      <text x="936" y="430" fontSize="13">A0</text><text x="936" y="466" fontSize="13">A1</text><text x="936" y="502" fontSize="13">A2</text><text x="936" y="540" fontSize="13">A3</text>
      <text x="935" y="664">S</text><text x="935" y="698">V</text><text x="935" y="736">G</text>
      <text x="360" y="804" fontSize="15" textLength="92">OFF/ON</text>
      <text transform="translate(1012,650) rotate(-90)" fontSize="15" textLength="50">RESET</text>
    </g>
    <path d="M355 800l-12-3v-8l12 3zM452 788h10v20h-10z" fill={T} />
    <g fill="none" stroke="#8a8a8a" strokeWidth="3">
      <circle cx="102" cy="828" r="46" />
      <path d="M55 782l94 94M149 782l-94 94" />
    </g>
    <path d="M56 828h92M102 782v92" stroke="#e00000" strokeWidth="3" />
  </g>
);

const Sheet = () => {
  const stroke = { stroke: R, fill: "none", strokeWidth: 1 };
  return (
    <g transform="translate(-36,-138)" shapeRendering="crispEdges">
      <path d="M76.5 130V897.5H1485.5V130" stroke="#7c7c7c" fill="none" strokeWidth="1" />
      <path d="M122 130V850H1438V130M132 130V841H1429V130" {...stroke} />
      <path d="M122 184h10M122 422h10M122 660h10M1429 184h9M1429 422h9M1429 660h9M361.5 841v9M598.5 841v9M835.5 841v9M1072.5 841v9M1309.6 841v9M361.5 138v9M598.5 138v9M835.5 138v9M1072.5 138v9M1309.6 138v9" {...stroke} />
      <path d="M916.4 689.3H1429M916.4 689.3V841M916.4 762.3H1429M916.4 791.3H1429M916.4 810H1429M916.4 824.3H1429M1011.4 810V824.3M1314.3 810V841" {...stroke} />
      <g fontFamily="DejaVu Sans, sans-serif" fill={R} fontSize="10.5">
        <text x="922" y="704" textLength="268" lengthAdjust="spacing">License: Creative commons Attribution ShareAlike</text>
        <text x="922" y="718.5" textLength="200">Author:  Eladio Delagado Mingorance</text>
        <text x="922" y="733" textLength="245">Migration to kicad:  Juan Gonzalez (Obijuan)</text>
        <text x="922" y="747" textLength="158">Derived from BQ Icezum V1.0</text>
        <text x="922" y="761" textLength="50" fontWeight="bold" fill="#780000">FPGAwars</text>
        <text x="922" y="775" textLength="31">Sheet:</text>
        <text x="922" y="788" textLength="21">File:</text>
        <text x="922" y="806" fontSize="15" fontWeight="bold" fontStyle="italic" fill="#780000" textLength="304">Title: IceZUM Alhambra FPGA board (PCB)</text>
        <text x="922" y="822" textLength="42">Size: A4</text>
        <text x="1027" y="822" textLength="103">Date: 2017-11-03</text>
        <text x="1326" y="822" textLength="56" fontWeight="bold" fill="#780000">Rev: V1.1K</text>
        <text x="922" y="836" textLength="275">KiCad E.D.A.  kicad 5.0.0-fee4fd166ubuntu16.04.1</text>
        <text x="1326" y="836" textLength="37">Id: 1/1</text>
        <text x="128" y="307" textAnchor="middle">B</text><text x="128" y="543" textAnchor="middle">C</text><text x="128" y="783" textAnchor="middle">D</text>
        <text x="1433" y="307" textAnchor="middle">B</text><text x="1433" y="543" textAnchor="middle">C</text><text x="1433" y="784" textAnchor="middle">D</text>
        {["1", "2", "3", "4", "5", "6"].map((t, i) => <text key={t} x={[245, 482, 720, 957, 1194, 1432][i]} y="850" textAnchor="middle">{t}</text>)}
      </g>
    </g>
  );
};

const GridDots = () => (
  <g fill="#8a8a8a">
    {range(0, 14, 1).flatMap(r =>
      range(0, 26, 1).map(c => (
        <rect key={r + ":" + c} x={Math.round(52.4 + c * 60.28)} y={Math.round(16.3 + r * 60.33)} width="1" height="1" />
      ))
    )}
  </g>
);

const hTools1: (string | null)[] = ["save", null, "page", null, "mod", "modsearch", null, "undo", "redo", null, "print", "plot", null, "refresh", "zin", "zout", "zfit", "zsel", null, "find", null, "net", "bug", null];
const left: (string | number)[] = ["bugoff", "!grid", "polar", "unitin", "!unitmm", "cross", 0, "!rats", 0, "!zoneFill", "zoneLine", "zoneOutline", 0, "viaSketch", "padSketch", "trackSketch", "routeSketch", 0, "!layers", "meander", 0];
const right: (string | number)[] = ["!arrow", 0, "hlnet", "localrats", 0, "module", "track", "via", "zoneFill2", "keep", 0, "poly", "circle", "arc", "polygon", "text", 0, "dim", "target", 0, "trash", 0, "origin", "gridorigin", "measure"];

const layers: [string, string, boolean][] = [
  ["F.Cu", "#840000", false], ["In1.Cu", "#c2c200", false], ["In2.Cu", "#c200c2", false], ["B.Cu", "#008400", false],
  ["F.Adhes", "#840084", false], ["F.Paste", "#840000", false], ["F.SilkS", "#008484", true], ["B.SilkS", "#840084", true],
  ["F.Mask", "#840084", false], ["B.Mask", "#848400", false], ["Dwgs.User", "#c2c2c2", false], ["Cmts.User", "#000084", false],
  ["Eco1.User", "#008400", false], ["Eco2.User", "#c2c200", false], ["Edge.Cuts", "#c2c200", true], ["Margin", "#c200c2", false],
  ["F.CrtYd", "#c2c2c2", false], ["F.Fab", "#848484", true],
];

const Tri: React.FC<{ d: "u" | "d" | "l" | "r" }> = ({ d }) => {
  const p = { u: "M1 7h10L6 2z", d: "M1 2h10L6 7z", l: "M8 0v10L3 5z", r: "M3 0v10l5-5z" }[d];
  return <svg width="12" height="10" viewBox="0 0 12 10"><path d={p} fill="#000" /></svg>;
};

const renderV = (items: (string | number)[], sep: number, h: number) =>
  items.map((it, i) =>
    typeof it === "number" ? (
      <VSep key={i} $h={sep} />
    ) : (
      <VTool key={i} $h={h} $active={it.startsWith("!")}><I n={it.replace("!", "")} /></VTool>
    )
  );

export default function App() {
  return (
    <Page>
      <Global />
      <TitleBar>
        <TitleText>Pcbnew — /home/josezq/Documentos/DISCO DURO MELQUISEDEC/icezum-master/src-kicad/icezum.kicad_pcb</TitleText>
        <WinButtons>
          <WinButton><svg width="18" height="18"><path d="M1 15h16" stroke="#fff" strokeWidth="2" /></svg></WinButton>
          <WinButton><svg width="18" height="18"><rect x="2" y="3" width="14" height="13" stroke="#fff" fill="none" strokeWidth="1.5" /></svg></WinButton>
          <WinButton $close><svg width="20" height="20"><path d="M2 2l16 16M18 2L2 18" stroke="#fff" strokeWidth="2" /></svg></WinButton>
        </WinButtons>
      </TitleBar>
      <MenuBar>
        {["File", "Edit", "View", "Setup", "Place", "Route", "Inspect", "Tools", "Preferences", "Help"].map(m => <MenuItem key={m}>{m}</MenuItem>)}
      </MenuBar>
      <ToolRow>
        {hTools1.map((t, i) => (t ? <HTool key={i}><I n={t} /></HTool> : <HSep key={i} />))}
        <Combo $w={159} $fs={17.6}><ComboSwatch /><ComboText>F.Cu (PgUp)</ComboText><Caret /></Combo>
        <HTool><I n="layerbtn" s={24} /></HTool>
      </ToolRow>
      <ToolRow2>
        <Combo $w={270} $fs={17.5}><ComboText>Track: 0.250 mm (9.84 mils) *</ComboText><Caret /></Combo>
        <Combo $w={410} $fs={18}><ComboText>Via: 0.74 mm (29.1 mils)/ 0.30 mm (11.8 mils) *</ComboText><Caret /></Combo>
        <HSep />
        <Svg s={26}>{icons.trackvia}</Svg>
        <HSep />
        <Combo $w={274} $fs={17.5}><ComboText>Grid: 1.2700 mm (50.00 mils)</ComboText><Caret /></Combo>
        <ComboGap />
        <Combo $w={148} $fs={17}><ComboText>Zoom Auto</ComboText><Caret /></Combo>
      </ToolRow2>
      <Main>
        <VBar $w={36} $pad={3}>{renderV(left, 9.6, 34)}</VBar>
        <Center>
          <CanvasRow>
            <CanvasWrap>
              <svg width="1588" height="817" viewBox="0 0 1588 817">
                <GridDots />
                <Sheet />
                <Board />
              </svg>
            </CanvasWrap>
            <VScroll>
              <ArrowBtn><Tri d="u" /></ArrowBtn>
              <VThumb />
              <ArrowBtn><Tri d="d" /></ArrowBtn>
            </VScroll>
          </CanvasRow>
          <HScrollRow>
            <HScroll>
              <ArrowBtnH><Tri d="l" /></ArrowBtnH>
              <HThumb />
              <ArrowBtnH><Tri d="r" /></ArrowBtnH>
            </HScroll>
          </HScrollRow>
        </Center>
        <VBar $w={38} $pad={4.5}>{renderV(right, 9.6, 33.7)}</VBar>
        <Grip />
        <Panel>
          <PanelCaption>Layers Manager</PanelCaption>
          <TabRow>
            <Tab $on>Layers</Tab>
            <Tab>Items</Tab>
          </TabRow>
          <TabBody>
            {layers.map(([n, c, on], i) => (
              <LayerRow key={n}>
                <LayerArrow $on={i === 0} />
                <Swatch $c={c} />
                <Check $on={on}>{on ? "✕" : ""}</Check>
                {n}
              </LayerRow>
            ))}
          </TabBody>
        </Panel>
      </Main>
      <Status>
        <Stats>
          <Stat $w={83} $c="#004400">Pads<br />854</Stat>
          <Stat $w={79} $c="#004400">Vias<br />228</Stat>
          <Stat $w={175} $c="#004400">Track Segments<br />1906</Stat>
          <Stat $w={95} $c="#004c4c">Nodes<br />843</Stat>
          <Stat $w={82} $c="#840000">Nets<br />242</Stat>
          <Stat $w={100} $c="#000084">Unrouted<br />0</Stat>
        </Stats>
        <Readouts>
          <Readout $w={87}>Z 1.33</Readout>
          <Readout $w={120}>X 293.370000</Readout>
          <Readout $w={140}>Y 121.920000</Readout>
          <Readout $w={129}>dx 293.370000</Readout>
          <Readout $w={129}>dy 121.920000</Readout>
          <Readout $w={150}>dist 317.696</Readout>
          <Readout $w={40}>mm</Readout>
        </Readouts>
      </Status>
      <Taskbar>
        <svg width="32" height="34" viewBox="0 0 32 34">
          <path d="M2 3h20c5 0 8 3 8 8v14c0 4-3 7-7 7H10c-4 0-6-3-6-6V11H2z" fill="#e2f2d4" stroke="#a9d28a" />
          <path d="M9 9v12c0 3 2 5 5 5h6c3 0 5-2 5-5V13c0-3-4-3-4 0v8M17 12c0-3-4-3-4 0v9" stroke="#76b84e" strokeWidth="2" fill="none" />
        </svg>
        <Desks>R I J 3</Desks>
        <Launcher $l={8} $w={32}>
          <svg width="32" height="34" viewBox="0 0 32 34"><rect x="1" y="2" width="30" height="6" fill="#e8e8e8" /><rect x="1" y="8" width="30" height="20" fill="#c84f90" /><rect x="6" y="28" width="20" height="5" fill="#7a3050" /></svg>
        </Launcher>
        <Launcher $l={18} $w={27}><Folder s={28} /></Launcher>
        <Launcher $l={9} $w={27}><Firefox /></Launcher>
        <Launcher $l={8} $w={28}>
          <svg width="28" height="34" viewBox="0 0 28 34"><ellipse cx="14" cy="17" rx="14" ry="16" fill="#1e7ac8" /><path d="M2 17c6-8 14-10 22-8-6 2-9 5-10 8 4 0 8 2 12 6-6-2-14-3-24-6z" fill="#f4f8fa" /></svg>
        </Launcher>
        <Launcher $l={7} $w={30}>
          <svg width="30" height="34" viewBox="0 0 30 34"><ellipse cx="15" cy="17" rx="15" ry="16" fill="#8cbc20" /><circle cx="15" cy="17" r="9" fill="#f0f6e0" /><rect x="10" y="12" width="10" height="10" fill="#8cbc20" /><path d="M10 17h10M15 12v10" stroke="#f0f6e0" /></svg>
        </Launcher>
        <Launcher $l={8} $w={27}>
          <svg width="27" height="32" viewBox="0 0 27 32"><rect width="27" height="32" y="0" rx="2" fill="#ee8a18" /><path d="M0 30L22 6v26zM6 30L22 12" stroke="#fff" strokeWidth="1.4" fill="#f6a83a" /></svg>
        </Launcher>
        <Launcher $l={9} $w={27}>
          <svg width="27" height="34" viewBox="0 0 27 34"><rect y="6" width="27" height="27" rx="2" fill="#e07818" /><rect y="1" width="27" height="6" fill="#222" /><path d="M4 1l3 6M11 1l3 6M18 1l3 6" stroke="#eee" strokeWidth="2" /><path d="M2 30L25 12v14L12 33H2z" fill="#d8d8d8" /></svg>
        </Launcher>
        <Launcher $l={19} $w={0} />
        <Task><Folder s={24} />sj</Task>
        <Task><Firefox w={24} />Linux Mint | ...</Task>
        <Task><TermIcon />josezq@josez...</Task>
        <Task><KicadDoc />KiCad 5.0.0-fe...</Task>
        <Task $on><KicadDoc />Pcbnew — /h...</Task>
        <Task><KicadDoc />[Eeschema —...</Task>
        <Task><KicadDoc />3D Viewer</Task>
        <Task>
          <svg width="24" height="30" viewBox="0 0 24 30"><rect width="24" height="30" rx="2" fill="#e8a888" /><path d="M2 12c6-6 14-5 20 4-6 0-14-1-20-4z" fill="#fff" stroke="#333" /><circle cx="13" cy="13" r="4" fill="#4a86a8" /></svg>
          3.png
        </Task>
        <Tray>
          <TrayItem $w={24}><svg width="18" height="28" viewBox="0 0 18 28"><path d="M16 2L6 18M6 14l5 4-7 8-2-2z" stroke="#e3eef5" strokeWidth="2" fill="#e3eef5" /></svg></TrayItem>
          <TrayItem $w={25}><svg width="18" height="6"><g fill="#e3eef5"><rect y="1" width="4" height="4" /><rect x="7" y="1" width="4" height="4" /><rect x="14" y="1" width="4" height="4" /></g></svg></TrayItem>
          <TrayItem $w={27}><svg width="18" height="26" viewBox="0 0 18 26"><rect x="1" y="4" width="16" height="20" rx="2" fill="#d9e6ec" /><rect x="5" y="1" width="8" height="4" fill="#d9e6ec" /><rect x="5" y="8" width="8" height="13" fill="#4a606e" /></svg></TrayItem>
          <TrayItem $w={22}><svg width="22" height="26" viewBox="0 0 22 26"><path d="M1 9h5l6-6v20l-6-6H1z" fill="#d9e6ec" /><path d="M15 8q3 5 0 10M18 5q5 8 0 16" stroke="#d9e6ec" strokeWidth="1.5" fill="none" /></svg></TrayItem>
          <TrayItem $w={32}><svg width="24" height="28" viewBox="0 0 24 28"><circle cx="9" cy="10" r="8" fill="#e06840" /><circle cx="19" cy="10" r="5" fill="#e8e0d8" /><rect x="7" y="18" width="5" height="7" fill="#d8c050" /></svg></TrayItem>
          <TrayItem $w={66}>02-09</TrayItem>
          <TrayItem $w={53}>11:23</TrayItem>
          <TrayItem $w={16}><svg width="16" height="18" viewBox="0 0 16 18"><rect x="1" y="1" width="11" height="10" fill="none" stroke="#e3eef5" strokeWidth="1.5" /><path d="M5 11v5h10V6h-3" fill="none" stroke="#e3eef5" strokeWidth="1.5" /></svg></TrayItem>
        </Tray>
      </Taskbar>
    </Page>
  );
}
